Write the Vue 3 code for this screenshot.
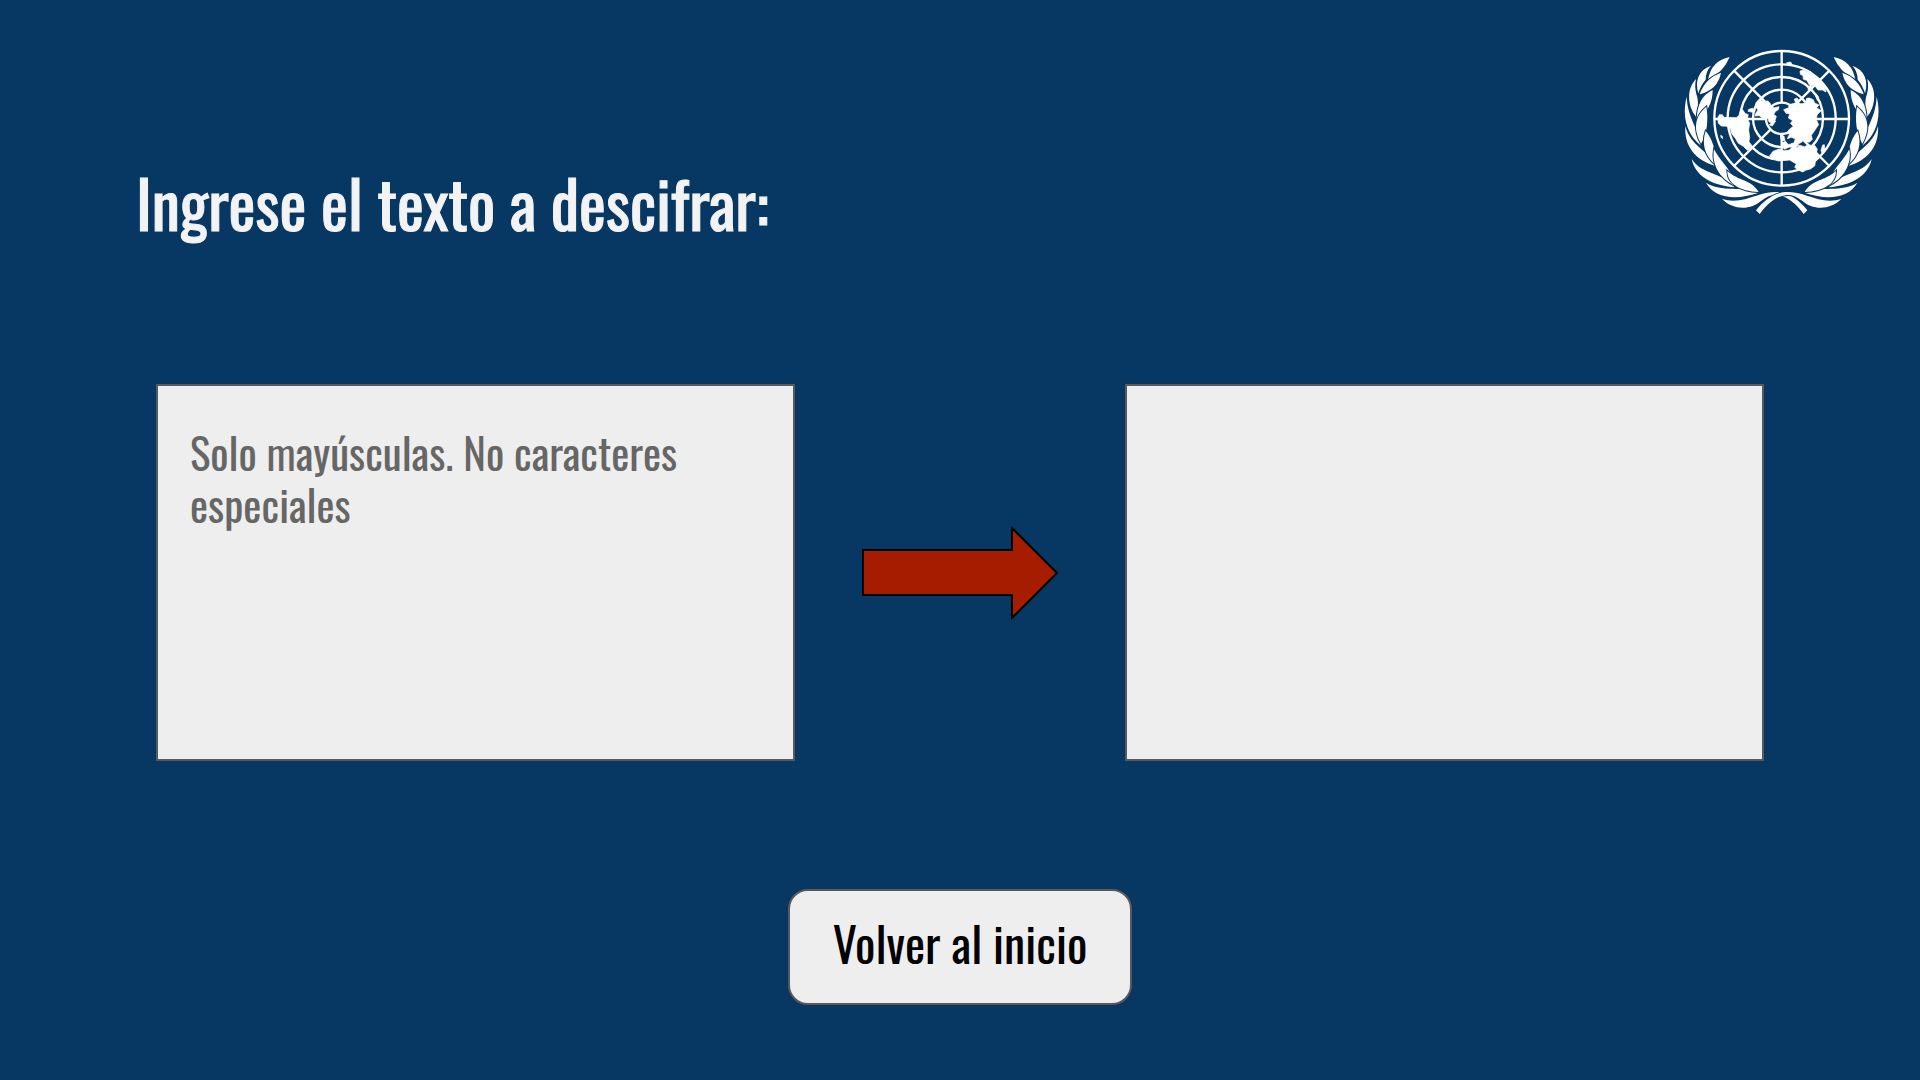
<script setup>
import { ref } from 'vue'

const message = ref('')
const result = ref('')

const radii = [47, 86, 124, 162, 202]
const branch = [
  'M179 81Q124 92 114 149Q160 128 179 81Z',
  'M123 107C86 120 74 152 85 190Q92 166 107 149Q107 124 123 107Z',
  'M153 128Q104 146 89 193Q144 178 153 128Z',
  'M78 147C49 176 52 228 78 260C84 238 87 214 79 192Q73 170 78 147Z',
  'M128 180Q81 202 80 269Q128 238 128 180Z',
  'M50 200C35 260 50 314 93 347C89 300 53 268 50 200Z',
  'M109 230C72 260 70 300 93 341C111 312 116 268 109 230Z',
  'M46 288C42 348 76 390 134 407C118 362 60 348 46 288Z',
  'M107 303C94 340 104 378 136 404C138 365 129 328 107 303Z',
  'M65 387C76 440 128 466 194 472C164 428 96 436 65 387Z',
  'M132 358C124 402 148 446 196 468C190 424 158 404 132 358Z',
  'M108 458C134 504 196 512 264 489C220 466 154 488 108 458Z',
  'M172 423C172 460 208 484 266 486C244 448 206 454 172 423Z',
  'M156 507C192 542 242 540 274 512C300 491 323 491 345 502C369 514 386 532 401 552L412 541C391 514 362 492 331 487C288 483 262 498 225 508Q187 517 156 507Z',
]
const lands = [
  'M143 264L148 254L157 254L162 262L199 263L207 256L210 244L218 239L225 250L235 254L232 266L239 280L236 300L239 322L236 340L242 354L232 361L220 349L205 340L196 325L185 311L181 296L171 289L154 288L145 280Z',
  'M152 316l5 3 1 7-5-4Z',
  'M236 238l12-3 8 7-8 5-14-3Z',
  'M258 218L266 209L280 214L294 213L302 222L303 231L314 233L327 230L325 239L317 244L311 253L319 259L316 269L308 279L297 276L294 265L281 268L268 257L255 258L258 248L264 240L256 230Z',
  'M298 285l14-15 5 3-10 15Z',
  'M341 239L356 233L357 224L372 220L381 216L392 221L406 220L410 205L418 204L430 209L434 219L447 225L440 233L454 242L446 250L441 255L439 269L446 284L439 294L431 306L424 316L427 328L418 337L408 335L401 326L396 336L384 342L370 343L376 327L365 322L352 326L358 313L352 306L359 297L370 289L361 280L368 272L355 264L359 252L348 250Z',
  'M331 316l11 2 3 15-12-4Z',
  'M334 339l13-5 8 10 15-5 17 6-11 8-19-2-13 7-7-7Z',
  'M299 377L309 364L327 357L344 362L358 360L366 352L383 352L389 346L403 350L414 345L435 347L442 358L439 368L445 377L437 391L434 408L421 417L407 421L398 426L385 420L374 412L379 402L369 396L359 390L345 391L325 393L303 385Z',
  'M453 361l5-16 5-1 2 15-9 11Z',
  'M390 123L401 120L411 126L421 124L430 137L446 145L455 159L466 171L468 186L457 180L444 180L435 168L419 166L410 151L400 148L399 137L391 133Z',
  'M414 173l8-8 6 9-5 6-9-1Z',
  'M373 207l8-3 6 8-4 4-8-1Z',
  'M438 191l7 9 2 14-5-3-5-14Z',
  'M350 98l12-2 4 7-14 1Z',
]
</script>

<template>
  <main class="page">
    <header class="top">
      <h1><label for="message">Ingrese el texto a descifrar:</label></h1>
      <svg class="emblem" viewBox="42 57 585 498" role="img" aria-label="Naciones Unidas">
        <g class="leaves">
          <path v-for="(d, i) in branch" :key="i" :d="d" />
        </g>
        <g class="leaves" transform="translate(670 0) scale(-1 1)">
          <path v-for="(d, i) in branch" :key="i" :d="d" />
        </g>
        <g class="lines">
          <circle v-for="r in radii" :key="r" cx="335" cy="265" :r="r" />
          <path d="M335 63V218M335 312V467M133 267H288M382 267H537M192 122L302 232M368 232L478 122M192 408L302 298M368 298L478 408" />
        </g>
        <g class="lands">
          <path v-for="(d, i) in lands" :key="i" :d="d" />
        </g>
      </svg>
    </header>

    <section class="work">
      <textarea id="message" v-model="message" class="box" placeholder="Solo mayúsculas. No caracteres especiales"></textarea>
      <svg class="arrow" viewBox="0 0 198 94" aria-hidden="true">
        <path d="M2 24H151V2L196 47L151 92V69H2Z" />
      </svg>
      <textarea v-model="result" class="box" aria-label="Texto descifrado" readonly></textarea>
    </section>

    <footer class="bottom">
      <button type="button">Volver al inicio</button>
    </footer>
  </main>
</template>

<style>
body {
  margin: 0;
  background: #073763;
}
</style>

<style scoped>
.page {
  box-sizing: border-box;
  min-height: 100vh;
  padding-top: 49px;
  background: #073763;
  font-family: Oswald, "Liberation Sans Narrow", "Liberation Sans", sans-serif;
}
.top {
  display: flex;
  justify-content: space-between;
  align-items: flex-start;
  padding: 0 41px 0 136px;
}
h1 {
  margin: 109px 0 0;
  color: #f3f3f3;
  font-size: 64px;
  line-height: 88px;
  font-weight: 400;
  -webkit-text-stroke: 1px #f3f3f3;
}
.emblem {
  flex: none;
  width: 195px;
  height: 166px;
}
.lines {
  fill: none;
  stroke: #fff;
  stroke-width: 7;
}
.lands {
  fill: #fff;
  stroke: #fff;
  stroke-width: 2;
}
.leaves {
  fill: #fff;
  stroke: #073763;
  stroke-width: 6;
  paint-order: stroke;
}
.work {
  display: grid;
  grid-template-columns: 1fr 330px 1fr;
  align-items: center;
  margin-top: 138px;
  padding: 0 156px;
}
.box {
  box-sizing: border-box;
  width: 100%;
  height: 377px;
  margin: 0;
  padding: 40px 32px;
  border: 2px solid #595959;
  border-radius: 0;
  outline: none;
  resize: none;
  background: #eee;
  color: #000;
  font-family: inherit;
  font-size: 43px;
  line-height: 52px;
}
.box::placeholder {
  color: #666;
  opacity: 1;
}
.arrow {
  justify-self: center;
  width: 198px;
  height: 94px;
}
.arrow path {
  fill: #a61c00;
  stroke: #000;
  stroke-width: 2;
}
.bottom {
  display: flex;
  justify-content: center;
  padding: 128px 0 72px;
}
button {
  min-width: 344px;
  height: 116px;
  padding: 0 32px 8px;
  border: 2px solid #595959;
  border-radius: 20px;
  background: #eee;
  color: #000;
  font-family: inherit;
  font-size: 48px;
  line-height: 64px;
}
</style>
